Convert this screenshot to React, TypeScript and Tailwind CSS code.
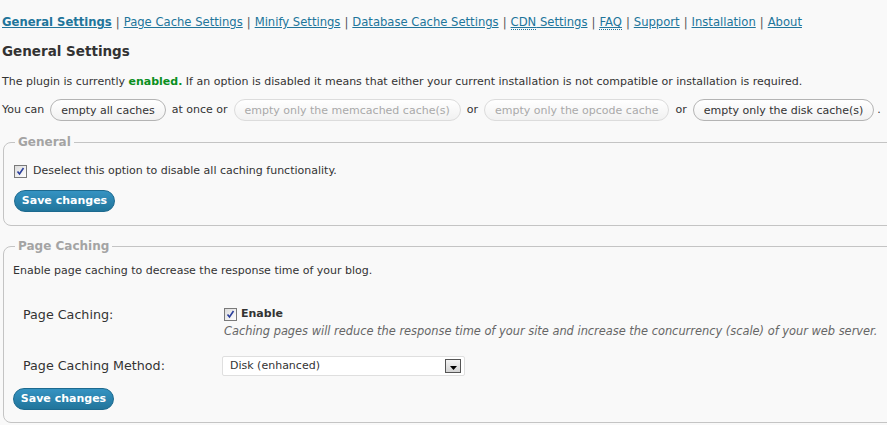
import React from "react";

const navLinks = [
  { label: "General Settings", active: true },
  { label: "Page Cache Settings" },
  { label: "Minify Settings" },
  { label: "Database Cache Settings" },
  { label: "CDN", rest: " Settings", abbr: true },
  { label: "FAQ", abbr: true },
  { label: "Support" },
  { label: "Installation" },
  { label: "About" },
];

const PillButton = ({ children, disabled }: { children: React.ReactNode; disabled?: boolean }) => (
  <button
    className={`h-[22px] rounded-full border px-[10px] text-[11px] leading-none bg-gradient-to-b from-white to-[#f1f1f1] ${
      disabled ? "border-[#dcdcdc] text-[#a9a9a9]" : "border-[#b4b4b4] text-[#333]"
    }`}
  >
    {children}
  </button>
);

const SaveButton = () => (
  <button className="h-[22px] w-[101px] rounded-full border border-[#1d6a8f] bg-gradient-to-b from-[#3593c2] to-[#21759b] text-[11px] font-bold text-white">
    Save changes
  </button>
);

const Check = () => (
  <span className="inline-flex h-[13px] w-[13px] items-center justify-center border border-[#7a7a7a] bg-gradient-to-br from-[#dcdcdc] to-white">
    <svg width="9" height="9" viewBox="0 0 9 9">
      <path d="M1.5 4.5 L3.5 7 L7.5 1" fill="none" stroke="#2b3f9c" strokeWidth="1.6" />
    </svg>
  </span>
);

export default function App() {
  return (
    <div className="min-h-[425px] bg-[#f9f9f9] pl-[2px] pt-[14px] text-[11px] text-[#333] font-['DejaVu_Sans','Verdana',sans-serif]">
      <div className="flex items-center text-[11.6px] leading-[16px]">
        {navLinks.map((l, i) => (
          <React.Fragment key={l.label}>
            {i > 0 && <span className="px-[4px] text-[#555]">|</span>}
            <a href="#" className={`text-[#21759b] underline ${l.active ? "font-bold" : ""}`}>
              {l.abbr ? <abbr className="border-b border-dotted border-[#21759b] no-underline">{l.label}</abbr> : l.label}
              {l.rest}
            </a>
          </React.Fragment>
        ))}
      </div>

      <h2 className="mt-[12px] text-[13.5px] font-bold leading-[18px] text-[#333]">General Settings</h2>

      <p className="mt-[14px] leading-[16px]">
        The plugin is currently <span className="font-bold text-[#0a8f1e]">enabled.</span> If an option is disabled it means that either your current installation is not compatible or installation is required.
      </p>

      <div className="mt-[9px] flex items-center gap-[6px] leading-[16px]">
        <span>You can</span>
        <PillButton>empty all caches</PillButton>
        <span>at once or</span>
        <PillButton disabled>empty only the memcached cache(s)</PillButton>
        <span>or</span>
        <PillButton disabled>empty only the opcode cache</PillButton>
        <span>or</span>
        <PillButton>empty only the disk cache(s)</PillButton>
        <span className="-ml-[3px]">.</span>
      </div>

      <fieldset className="mt-[12px] -mr-[20px] ml-[1px] rounded-[8px] border border-[#c4c4c4] px-[10px] pb-[13px] pt-[12px]">
        <legend className="ml-[1px] px-[3px] text-[12px] font-bold text-[#a4a4a4]">General</legend>
        <label className="flex items-center gap-[6px] leading-[16px]">
          <Check />
          <span>Deselect this option to disable all caching functionality.</span>
        </label>
        <div className="mt-[11px]">
          <SaveButton />
        </div>
      </fieldset>

      <fieldset className="mt-[11px] -mr-[20px] ml-[1px] rounded-[8px] border border-[#c4c4c4] px-[9px] pb-[12px] pt-[8px]">
        <legend className="ml-[2px] px-[3px] text-[12px] font-bold text-[#a4a4a4]">Page Caching</legend>
        <p className="leading-[16px]">Enable page caching to decrease the response time of your blog.</p>
        <table className="mt-[27px]">
          <tbody>
            <tr>
              <td className="w-[211px] pl-[10px] align-top text-[12.7px] leading-[18px]">Page Caching:</td>
              <td className="align-top">
                <label className="flex items-center gap-[4px] leading-[16px]">
                  <Check />
                  <span className="font-bold">Enable</span>
                </label>
                <div className="mt-[1px] text-[11.4px] italic leading-[16px] text-[#666]">
                  Caching pages will reduce the response time of your site and increase the concurrency (scale) of your web server.
                </div>
              </td>
            </tr>
            <tr>
              <td className="pl-[10px] pt-[17px] text-[12.7px] leading-[18px]">Page Caching Method:</td>
              <td className="pt-[17px]">
                <div className="-ml-[2px] flex h-[20px] w-[243px] items-center justify-between rounded-[2px] border border-[#dfdfdf] bg-white pl-[7px] pr-[3px]">
                  <span>Disk (enhanced)</span>
                  <span className="flex h-[14px] w-[16px] items-end justify-center border border-[#555] bg-gradient-to-b from-[#f4f4f4] to-[#d4d4d4] pb-[2px]">
                    <svg width="7" height="4" viewBox="0 0 7 4">
                      <path d="M0 0 H7 L3.5 4 Z" fill="#000" />
                    </svg>
                  </span>
                </div>
              </td>
            </tr>
          </tbody>
        </table>
        <div className="mt-[12px]">
          <SaveButton />
        </div>
      </fieldset>
    </div>
  );
}
